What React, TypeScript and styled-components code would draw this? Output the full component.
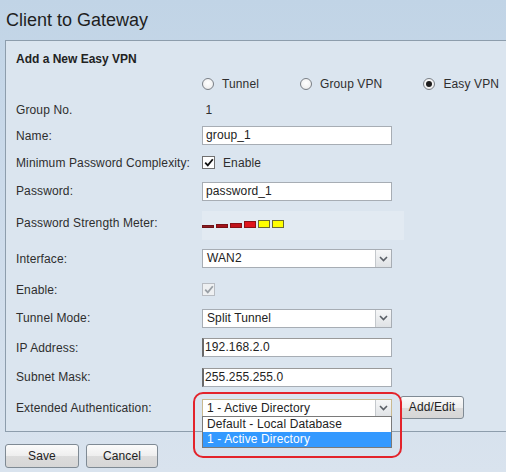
import React from 'react';
import styled, { createGlobalStyle } from 'styled-components';

const Global = createGlobalStyle`
  html, body { margin: 0; padding: 0; }
  body {
    width: 506px;
    height: 472px;
    overflow: hidden;
    background: linear-gradient(#c1d4e6 0px, #cbdaea 180px, #d9e3ee 472px);
    font-family: "Liberation Sans", Arial, sans-serif;
    font-size: 12px;
    letter-spacing: 0.12px;
    color: #2e2e2e;
  }
`;

const Page = styled.div`
  width: 506px;
  height: 472px;
`;

const Title = styled.h1`
  margin: 0;
  height: 40px;
  box-sizing: border-box;
  padding: 9px 0 0 6px;
  font-size: 18px;
  line-height: 22px;
  font-weight: normal;
  letter-spacing: 0;
  color: #1e1e1e;
`;

const Panel = styled.section`
  margin-left: 5px;
  border: 1px solid #8d9dac;
  border-right: none;
  background: #dbe5ef;
  padding: 6px 0 7px 10px;
`;

const Row = styled.div<{ $h: number }>`
  display: flex;
  align-items: center;
  height: ${(p) => p.$h}px;
`;

const Heading = styled.div`
  font-weight: bold;
  letter-spacing: 0;
  color: #222;
`;

const Label = styled.div`
  width: 186px;
  flex: none;
  white-space: nowrap;
`;

const Value = styled.div`
  display: flex;
  align-items: center;
  position: relative;
`;

const RadioGroup = styled.div`
  display: flex;
  align-items: center;
  gap: 41px;
  margin-left: 186px;
`;

const RadioOption = styled.label`
  display: flex;
  align-items: center;
  gap: 8px;
`;

const RadioDot = styled.span<{ $on?: boolean }>`
  width: 12px;
  height: 12px;
  box-sizing: border-box;
  border-radius: 50%;
  border: 1px solid #7a7f86;
  background: radial-gradient(circle at 50% 40%, #ffffff 0%, #f2f2f2 60%, #dcdcdc 100%);
  display: flex;
  align-items: center;
  justify-content: center;
  &::after {
    content: '';
    display: ${(p) => (p.$on ? 'block' : 'none')};
    width: 6px;
    height: 6px;
    border-radius: 50%;
    background: #1d1d1d;
  }
`;

const TextInput = styled.div<{ $inset?: boolean }>`
  width: 190px;
  height: 19px;
  box-sizing: border-box;
  background: #fff;
  border: 1px solid #a7adb4;
  ${(p) => (p.$inset ? 'border-left: 2px solid #6a6a6a; border-top: 1px solid #9a9a9a;' : '')}
  padding: 0 0 0 ${(p) => (p.$inset ? 1 : 3)}px;
  line-height: 17px;
  color: #222;
  white-space: nowrap;
`;

const CheckBox = styled.span<{ $disabled?: boolean }>`
  width: 13px;
  height: 13px;
  box-sizing: border-box;
  border: 1px solid ${(p) => (p.$disabled ? '#b8bcc2' : '#707070')};
  background: ${(p) => (p.$disabled ? '#eef0f2' : '#fff')};
  display: flex;
  align-items: center;
  justify-content: center;
`;

const CheckText = styled.span`
  margin-left: 8px;
`;

const Meter = styled.div`
  width: 202px;
  height: 29px;
  margin-top: 5px;
  background: #e2eaf2;
  display: flex;
  align-items: center;
  gap: 2px;
`;

const Bar = styled.span<{ $h: number; $c: string; $b: string }>`
  width: 12px;
  height: ${(p) => p.$h}px;
  box-sizing: border-box;
  background: ${(p) => p.$c};
  border: 1px solid ${(p) => p.$b};
  align-self: center;
  margin-top: ${(p) => 8 - p.$h - 4}px;
`;

const Select = styled.div<{ $focus?: boolean }>`
  width: 190px;
  height: 19px;
  box-sizing: border-box;
  background: #fff;
  border: 1px solid ${(p) => (p.$focus ? '#c9b98f' : '#a7adb4')};
  display: flex;
  align-items: stretch;
  color: #222;
`;

const SelectText = styled.span`
  flex: 1;
  padding-left: 4px;
  line-height: 17px;
  white-space: nowrap;
`;

const SelectArrow = styled.span`
  width: 16px;
  flex: none;
  box-sizing: border-box;
  border-left: 1px solid #c4c8cc;
  background: linear-gradient(#f6f7f8, #dfe2e5);
  display: flex;
  align-items: center;
  justify-content: center;
`;

const Button = styled.button<{ $w: number }>`
  width: ${(p) => p.$w}px;
  height: 24px;
  box-sizing: border-box;
  border: 1px solid #7f8a94;
  border-radius: 3px;
  background: linear-gradient(#fbfbfb 0%, #eeeeee 50%, #dcdcdc 51%, #d6d6d6 100%);
  font-family: "Liberation Sans", Arial, sans-serif;
  font-size: 12px;
  letter-spacing: 0.12px;
  color: #222;
  padding: 0;
`;

const SideButton = styled(Button)`
  margin-left: 8px;
  height: 23px;
  margin-top: -2px;
`;

const DropList = styled.div`
  position: absolute;
  left: 0;
  top: 18px;
  width: 190px;
  box-sizing: border-box;
  border: 1px solid #7a7a7a;
  background: #fff;
  z-index: 2;
`;

const DropItem = styled.div<{ $sel?: boolean }>`
  height: 15px;
  line-height: 15px;
  padding-left: 4px;
  background: ${(p) => (p.$sel ? '#3399ff' : '#fff')};
  color: ${(p) => (p.$sel ? '#fff' : '#222')};
  white-space: nowrap;
`;

const Highlight = styled.div`
  position: absolute;
  left: -9px;
  top: -6px;
  width: 209px;
  height: 66px;
  box-sizing: border-box;
  border: 2.5px solid #e3232b;
  border-radius: 10px;
  z-index: 3;
  pointer-events: none;
`;

const Footer = styled.div`
  display: flex;
  gap: 7px;
  padding: 12px 0 0 5px;
`;

const Chevron = () => (
  <svg width="9" height="6" viewBox="0 0 9 6">
    <path d="M1 1 L4.5 4.5 L8 1" fill="none" stroke="#5a5f66" strokeWidth="1.6" />
  </svg>
);

const Tick = ({ color }: { color: string }) => (
  <svg width="10" height="9" viewBox="0 0 10 9">
    <path d="M1.2 4.6 L3.8 7.4 L8.8 1.2" fill="none" stroke={color} strokeWidth="1.8" />
  </svg>
);

const bars = [
  { h: 3, c: '#8e1c22', b: '#6e1418' },
  { h: 4, c: '#a4121a', b: '#7a1014' },
  { h: 5, c: '#c0121a', b: '#8a1016' },
  { h: 7, c: '#e0141c', b: '#8a1016' },
  { h: 8, c: '#ffff00', b: '#6a6a30' },
  { h: 8, c: '#ffff00', b: '#6a6a30' },
];

export default function App() {
  return (
    <Page>
      <Global />
      <Title>Client to Gateway</Title>
      <Panel>
        <Row $h={24}>
          <Heading>Add a New Easy VPN</Heading>
        </Row>
        <Row $h={25}>
          <RadioGroup>
            <RadioOption>
              <RadioDot />
              Tunnel
            </RadioOption>
            <RadioOption>
              <RadioDot />
              Group VPN
            </RadioOption>
            <RadioOption>
              <RadioDot $on />
              Easy VPN
            </RadioOption>
          </RadioGroup>
        </Row>
        <Row $h={27}>
          <Label>Group No.</Label>
          <Value>&nbsp;1</Value>
        </Row>
        <Row $h={25}>
          <Label>Name:</Label>
          <Value>
            <TextInput>group_1</TextInput>
          </Value>
        </Row>
        <Row $h={29}>
          <Label>Minimum Password Complexity:</Label>
          <Value>
            <CheckBox>
              <Tick color="#111" />
            </CheckBox>
            <CheckText>Enable</CheckText>
          </Value>
        </Row>
        <Row $h={28}>
          <Label>Password:</Label>
          <Value>
            <TextInput>password_1</TextInput>
          </Value>
        </Row>
        <Row $h={36}>
          <Label>Password Strength Meter:</Label>
          <Value>
            <Meter>
              {bars.map((b, i) => (
                <Bar key={i} $h={b.h} $c={b.c} $b={b.b} />
              ))}
            </Meter>
          </Value>
        </Row>
        <Row $h={35}>
          <Label>Interface:</Label>
          <Value>
            <Select>
              <SelectText>WAN2</SelectText>
              <SelectArrow>
                <Chevron />
              </SelectArrow>
            </Select>
          </Value>
        </Row>
        <Row $h={27}>
          <Label>Enable:</Label>
          <Value>
            <CheckBox $disabled>
              <Tick color="#9aa0a6" />
            </CheckBox>
          </Value>
        </Row>
        <Row $h={30}>
          <Label>Tunnel Mode:</Label>
          <Value>
            <Select>
              <SelectText>Split Tunnel</SelectText>
              <SelectArrow>
                <Chevron />
              </SelectArrow>
            </Select>
          </Value>
        </Row>
        <Row $h={29}>
          <Label>IP Address:</Label>
          <Value>
            <TextInput $inset>192.168.2.0</TextInput>
          </Value>
        </Row>
        <Row $h={30}>
          <Label>Subnet Mask:</Label>
          <Value>
            <TextInput $inset>255.255.255.0</TextInput>
          </Value>
        </Row>
        <Row $h={32}>
          <Label>Extended Authentication:</Label>
          <Value>
            <Select $focus>
              <SelectText>1 - Active Directory</SelectText>
              <SelectArrow>
                <Chevron />
              </SelectArrow>
            </Select>
            <SideButton $w={64}>Add/Edit</SideButton>
            <DropList>
              <DropItem>Default - Local Database</DropItem>
              <DropItem $sel>1 - Active Directory</DropItem>
            </DropList>
            <Highlight />
          </Value>
        </Row>
      </Panel>
      <Footer>
        <Button $w={74}>Save</Button>
        <Button $w={72}>Cancel</Button>
      </Footer>
    </Page>
  );
}
